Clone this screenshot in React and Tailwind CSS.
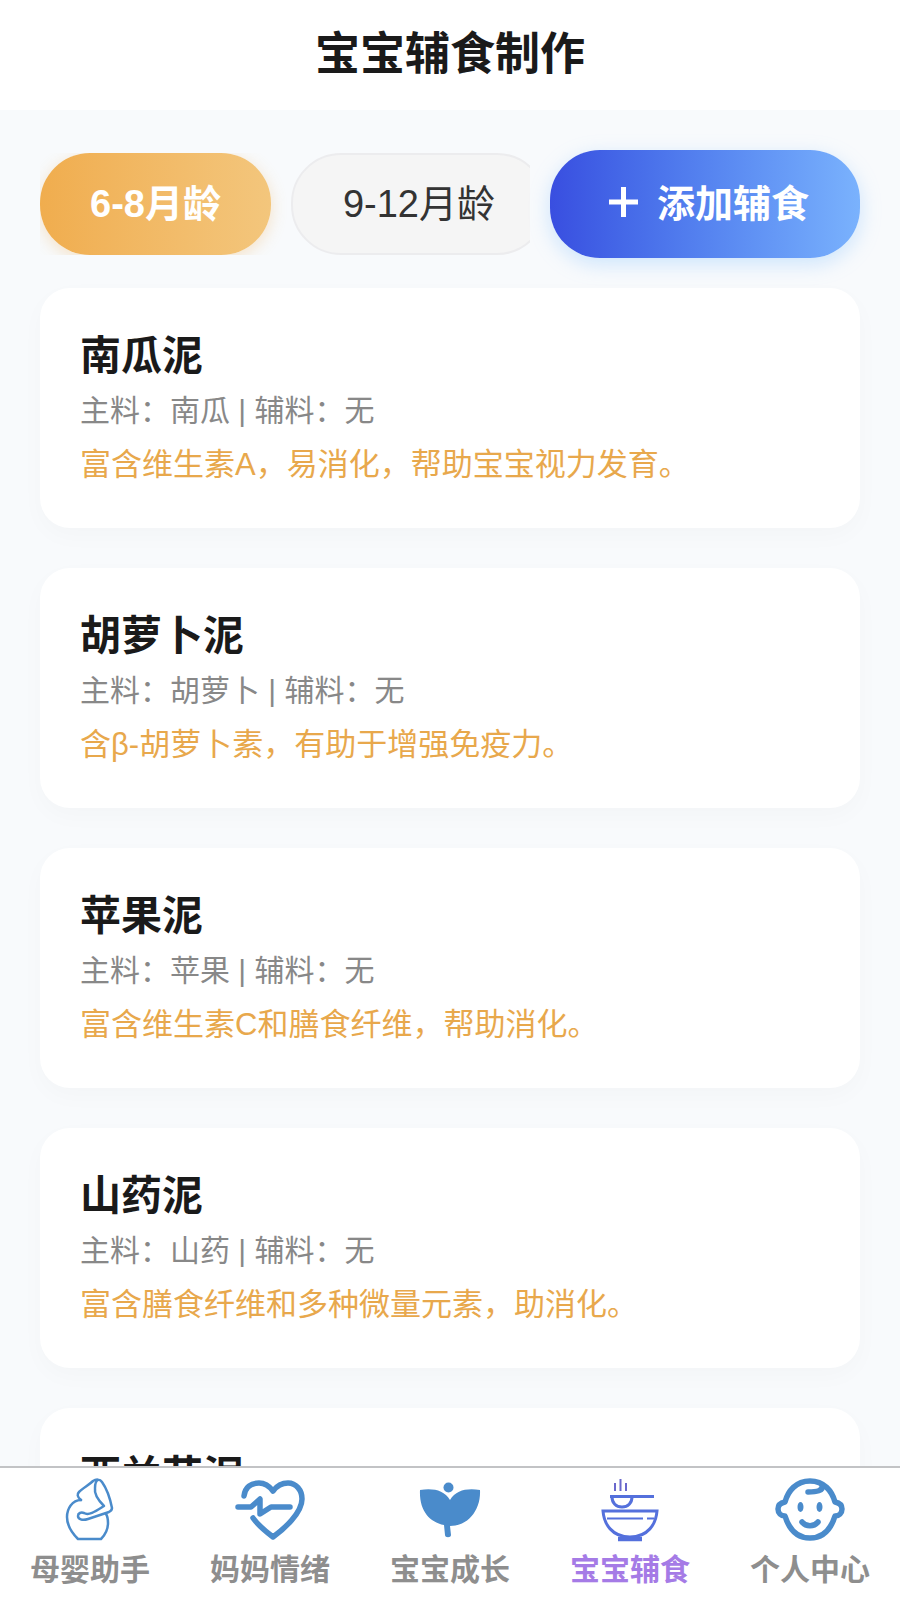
import React, { useState } from 'react';

const AGE_TABS = ['6-8月龄', '9-12月龄'];

const FOODS = [
  { name: '南瓜泥', main: '南瓜', side: '无', desc: '富含维生素A，易消化，帮助宝宝视力发育。' },
  { name: '胡萝卜泥', main: '胡萝卜', side: '无', desc: '含β-胡萝卜素，有助于增强免疫力。' },
  { name: '苹果泥', main: '苹果', side: '无', desc: '富含维生素C和膳食纤维，帮助消化。' },
  { name: '山药泥', main: '山药', side: '无', desc: '富含膳食纤维和多种微量元素，助消化。' },
  { name: '西兰花泥' },
];

const PlusIcon = () => (
  <svg viewBox="0 0 40 40" className="size-10" fill="none" stroke="currentColor" strokeWidth="5">
    <path d="M8 18H37M22.500 3V33" />
  </svg>
);

const MotherIcon = () => (
  <svg viewBox="0 0 72 64" className="h-16 w-[72px]" fill="none" stroke="#4a8bcb" strokeWidth="2.5" strokeLinejoin="round" strokeLinecap="round">
    <path d="M27 22C23 19 23 16 25 14C29 10 35 7 39 3C42 1 46 1 48 4C53 11 56 20 58 30C58 32 57 33 55 34L34 41C28 43 24 41 24 38C24 35 27 34 30 35C35 38 42 33 50 28C45 23 40 16 41 10C41 6 42 3 44 2" />
    <path d="M27 22C18 22 13 31 13 39C13 48 18 55 24 61H47C51 57 54 51 54 45C54 42 54 39 52 36" />
  </svg>
);

const HeartIcon = () => (
  <svg viewBox="0 0 72 64" className="h-16 w-[72px]" fill="none" stroke="#4a8bcb" strokeWidth="5.5" strokeLinejoin="round" strokeLinecap="round">
    <path d="M10 18C11 9 17 5 25 5C32 5 36 9 39 13C42 9 47 5 54 5C62 5 68 12 68 21C68 35 50 51 39 59C31 53 24 47 19 40" />
    <path d="M4 29H17L26 21V36L37 29H56" />
  </svg>
);

const SproutIcon = () => (
  <svg viewBox="0 0 72 64" className="h-16 w-[72px]" fill="#4a8bcb">
    <circle cx="34.500" cy="9.500" r="5" />
    <path d="M6 12C19 10 30 12 36 22C42 12 53 10 66 12C67 32 54 48 36 48L37 57C37 60 31 60 31 57L30 47C15 44 5 32 6 12Z" />
  </svg>
);

const BowlIcon = () => (
  <svg viewBox="0 0 72 64" className="h-16 w-[72px]" fill="none" stroke="#5470dc" strokeWidth="3">
    <path d="M21 5V13M26.500 1V13M32 5V13" stroke="#6a68cc" strokeWidth="2" />
    <path d="M16 18.500H60M18 19C18 25 22 29 28 29C34 29 38 25 38 19" />
    <path d="M9 33H63C62 46 54 59 36 59C18 59 10 46 9 33Z" />
    <path d="M13 40.500H49M53 40.500H60" strokeWidth="2" />
    <path d="M24 61H48" strokeWidth="4.500" />
  </svg>
);

const BabyIcon = () => (
  <svg viewBox="0 0 72 64" className="h-16 w-[72px]" fill="none" stroke="#4a8bcb" strokeWidth="5.5" strokeLinejoin="round" strokeLinecap="round">
    <path d="M36 3C22 3 14 13 11 24C6 25 4 28 4 31C4 35 7 38 11 38C15 51 23 60 36 60C49 60 57 51 61 38C65 38 68 35 68 31C68 28 66 25 61 24C58 13 50 3 36 3Z" />
    <path d="M48 7C50 13 42 14 34 14" />
    <path d="M28 44C32 49 40 49 44 44" />
    <ellipse cx="26.500" cy="29" rx="3" ry="5" fill="#4a8bcb" stroke="none" />
    <ellipse cx="45.500" cy="29" rx="3" ry="5" fill="#4a8bcb" stroke="none" />
  </svg>
);

const NAV_ITEMS = [
  { label: '母婴助手', Icon: MotherIcon },
  { label: '妈妈情绪', Icon: HeartIcon },
  { label: '宝宝成长', Icon: SproutIcon },
  { label: '宝宝辅食', Icon: BowlIcon, active: true },
  { label: '个人中心', Icon: BabyIcon },
];

const FoodCard = ({ food }) => (
  <li className="min-h-60 rounded-[30px] bg-white px-10 pt-10 pb-9 shadow-[0_8px_24px_rgba(0,0,0,0.025)]">
    <h2 className="text-[41px] leading-[56px] font-bold text-[#1a1a1a]">{food.name}</h2>
    {food.desc && (
      <>
        <p className="text-[30px] leading-[54px] text-[#888888]">主料：{food.main} | 辅料：{food.side}</p>
        <p className="text-[31px] leading-[54px] text-[#e8a84c]">{food.desc}</p>
      </>
    )}
  </li>
);

const App = () => {
  const [tab, setTab] = useState(0);

  return (
    <div className="flex h-screen flex-col bg-[#f8fafc] font-['Liberation_Sans','Noto_Sans_CJK_SC',sans-serif]">
      <header className="shrink-0 bg-white py-6">
        <h1 className="text-center text-[45px] leading-[62px] font-bold text-[#1a1a1a]">宝宝辅食制作</h1>
      </header>

      <main className="min-h-0 flex-1 overflow-y-auto px-10 pt-10 [scrollbar-width:none]">
        <div className="flex items-center gap-5">
          {/* Age tabs, scroll sideways when they don't fit */}
          <div className="flex min-w-0 flex-1 gap-5 overflow-x-auto [scrollbar-width:none]">
            {AGE_TABS.map((label, i) => (
              <button
                key={label}
                type="button"
                onClick={() => setTab(i)}
                className={`h-[102px] shrink-0 rounded-[50px] px-[50px] text-[38px] whitespace-nowrap ${
                  tab === i
                    ? 'bg-linear-to-r from-[#f0ad4e] to-[#f3c67c] font-bold text-white shadow-[0_4px_16px_rgba(240,173,78,0.3)]'
                    : 'border-2 border-[#ececee] bg-[#f5f5f5] text-[#333333]'
                }`}
              >
                {label}
              </button>
            ))}
          </div>
          <button type="button" className="flex h-[108px] w-[310px] shrink-0 items-center justify-center gap-4 rounded-[50px] bg-linear-to-r from-[#394ee0] to-[#7ab2fd] text-[38px] font-bold text-white shadow-[0_6px_20px_rgba(122,190,255,0.35)]">
            <PlusIcon />
            添加辅食
          </button>
        </div>

        <ul className="mt-[30px] flex flex-col gap-10 pb-10">
          {FOODS.map((food) => <FoodCard key={food.name} food={food} />)}
        </ul>
      </main>

      <nav className="grid shrink-0 grid-cols-5 border-t-2 border-[#c2c3c5] bg-white py-2.5">
        {NAV_ITEMS.map(({ label, Icon, active }) => (
          <a key={label} href="#" className="flex flex-col items-center gap-2">
            <Icon />
            <span className={`text-[30px] leading-10 font-bold ${active ? 'text-[#a57be6]' : 'text-[#8e8e8e]'}`}>{label}</span>
          </a>
        ))}
      </nav>
    </div>
  );
};

export default App;
